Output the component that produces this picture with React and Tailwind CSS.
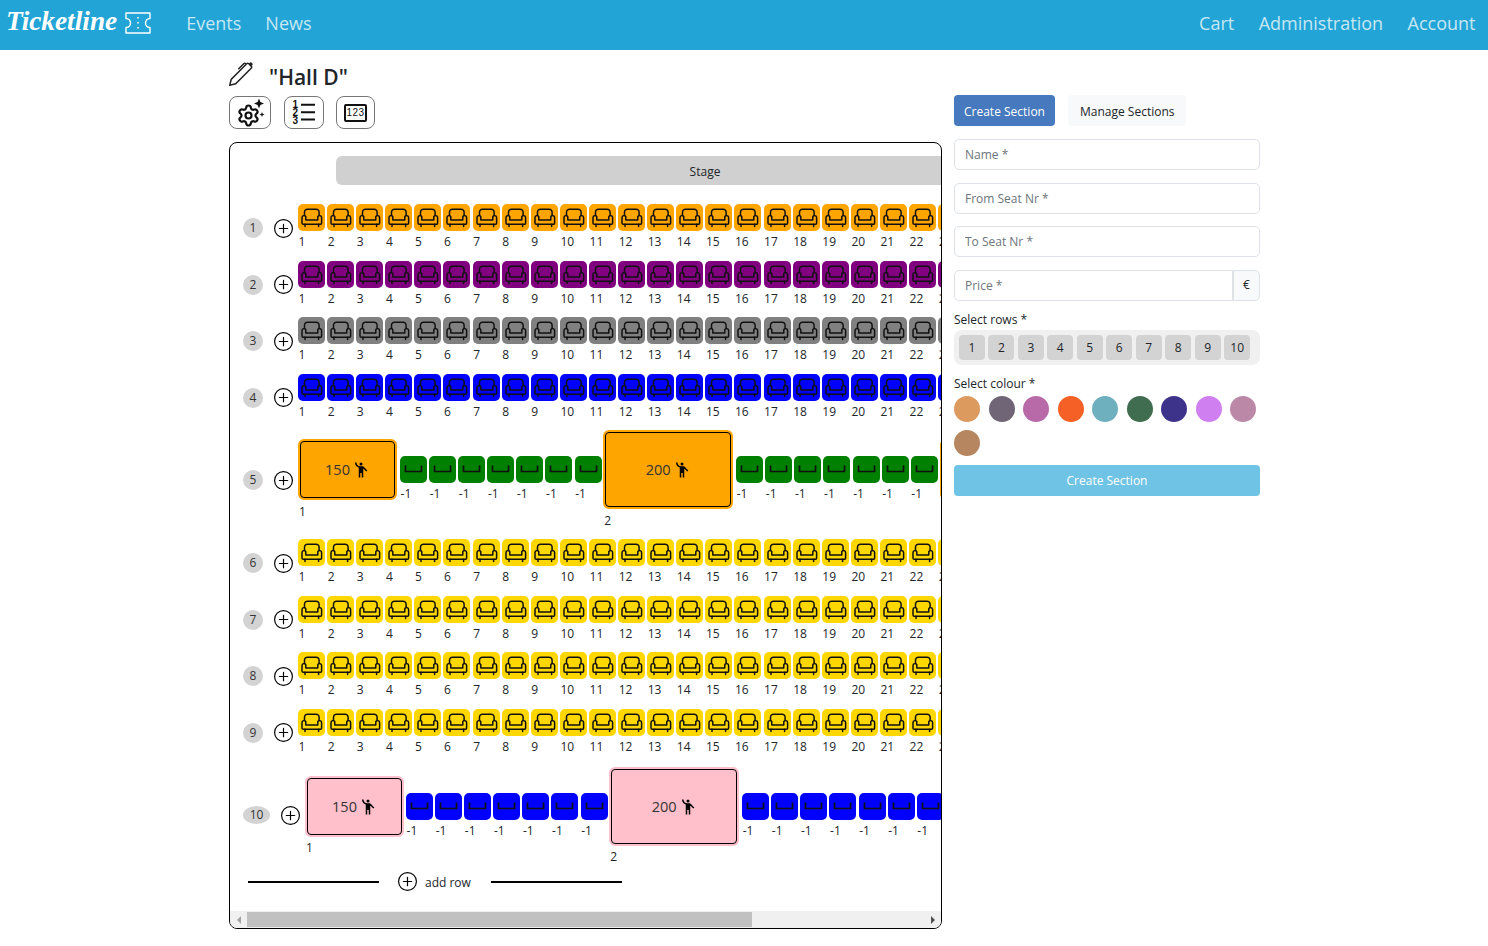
import { Settings } from "lucide-react";
import { BsPen, BsPlusCircle } from "react-icons/bs";
import { MdEmojiPeople } from "react-icons/md";

const range = (n) => Array.from({ length: n }, (_, i) => i + 1);

function ChairIcon() {
  return (
    <svg viewBox="0 0 27 27" className="h-[27px] w-[27px]" fill="none" stroke="#111" strokeWidth="1.5" strokeLinecap="round" strokeLinejoin="round">
      <path d="M6.5 11.5V8.2a3 3 0 0 1 3-3h8.6a3 3 0 0 1 3 3v3.3" />
      <path d="M4 13.5a2 2 0 0 1 3.8-.8V16h12v-3.3a2 2 0 0 1 3.8.8V19a1.3 1.3 0 0 1-1.3 1.3H5.3A1.3 1.3 0 0 1 4 19z" />
      <path d="M7 20.3v2.2M20.6 20.3v2.2" />
    </svg>
  );
}

function EmptyIcon() {
  return (
    <svg viewBox="0 0 27 27" className="h-[27px] w-[27px]" fill="none" stroke="#111" strokeWidth="1.7">
      <path d="M5.5 9.5v6h16v-6" />
    </svg>
  );
}

function Seat({ color, label, empty }) {
  return (
    <div className="w-[29.1px] shrink-0">
      <div className={`h-[27px] w-[27px] rounded-[5px] ${color}`}>{empty ? <EmptyIcon /> : <ChairIcon />}</div>
      <div className="pt-[1px] pl-[0.6px] text-[12px] leading-[20px] text-[#212529]">{label}</div>
    </div>
  );
}

function Section({ big, pink, price, label }) {
  return (
    <div className={`shrink-0 ${pink && !big ? "mr-[2px]" : "mr-[3px]"}`}>
      <div
        className={`flex items-center justify-center rounded-[6px] border-2 ${pink ? "border-[#ffc0cb] bg-[#ffc0cb]" : "border-[#ffa500] bg-[#ffa500]"} ${big ? "h-[79px] w-[130px]" : "h-[61px] w-[99px]"}`}
      >
        <div className="flex h-full w-full items-center justify-center rounded-[4px] border border-black text-[14.5px] text-[#333]">
          {price}
          <MdEmojiPeople className="ml-[2px] h-[18px] w-[18px] text-black" />
        </div>
      </div>
      <div className={`pl-[1px] text-[12px] leading-[19.5px] text-[#212529] ${pink ? "mt-[1px]" : "mt-[2px]"}`}>{label}</div>
    </div>
  );
}

function RowLabel({ n }) {
  return (
    <div className={`flex shrink-0 items-center ${n === 10 ? "mb-[3px]" : ""}`}>
      {n === 10 ? (
        <div className="flex h-[18px] w-[27px] items-center justify-center rounded-[50%] bg-[#d3d3d3] text-[12px] text-[#333]">{n}</div>
      ) : (
        <div className="flex h-[20px] w-[20px] items-center justify-center rounded-full bg-[#d3d3d3] text-[12px] text-[#333]">{n}</div>
      )}
      <BsPlusCircle className="ml-[11px] mr-[5px] h-[19px] w-[19px] text-black" />
    </div>
  );
}

function SeatRow({ n, color }) {
  return (
    <div className="flex w-max items-center pl-[13px]">
      <RowLabel n={n} />
      <div className="flex">
        {range(24).map((i) => (
          <Seat key={i} color={color} label={i} />
        ))}
      </div>
    </div>
  );
}

function SectionRow({ n, pink, color }) {
  const empties = range(7).map((i) => <Seat key={i} color={color} label="-1" empty />);
  return (
    <div className={`flex w-max items-center pl-[13px] ${pink ? "mt-[2px]" : ""}`}>
      <RowLabel n={n} />
      <Section pink={pink} price="150" label="1" />
      {empties}
      <div className="-ml-[0.5px]">
        <Section big pink={pink} price="200" label="2" />
      </div>
      {empties}
      {!pink && <Section pink={pink} price="150" label="3" />}
    </div>
  );
}

function ToolbarButton({ className, children }) {
  return (
    <button type="button" className={`flex h-[33px] items-center justify-center rounded-[8px] border border-[#777] bg-white ${className}`}>
      {children}
    </button>
  );
}

function HallEditor() {
  return (
    <div className="flex w-[713px] shrink-0 flex-col">
      <div className="flex h-[46px] items-center">
        <BsPen className="mt-[2px] h-[24px] w-[24px] text-[#222]" />
        <h1 className="mt-[9px] ml-[16px] text-[21px] font-semibold text-[#212529]">"Hall D"</h1>
      </div>
      <div className="flex gap-[12.5px]">
        <ToolbarButton className="w-[42px]">
          <svg viewBox="0 0 36 30" className="h-[30px] w-[36px]">
            <Settings x="4.5" y="5.5" width="24" height="24" stroke="#111" strokeWidth="2.2" fill="none" />
            <path d="M27 0.5l1.4 3.6L32 5.5l-3.6 1.4L27 10.5l-1.4-3.6L22 5.5l3.6-1.4z" fill="#111" />
            <path d="M30 14l.7 1.8 1.8.7-1.8.7-.7 1.8-.7-1.8-1.8-.7 1.8-.7z" fill="#111" />
          </svg>
        </ToolbarButton>
        <ToolbarButton className="w-[40px]">
          <svg viewBox="0 0 30 28" className="h-[28px] w-[30px]">
            <text x="3.5" y="9" fontSize="10" fontWeight="700" fontFamily="Liberation Sans, sans-serif" fill="#111">1</text>
            <text x="3.5" y="16.8" fontSize="10" fontWeight="700" fontFamily="Liberation Sans, sans-serif" fill="#111">2</text>
            <text x="3.5" y="24.5" fontSize="10" fontWeight="700" fontFamily="Liberation Sans, sans-serif" fill="#111">3</text>
            <path d="M12 5.8h14M12 13.2h14M12 20.5h14" stroke="#111" strokeWidth="2" />
          </svg>
        </ToolbarButton>
        <ToolbarButton className="w-[39px]">
          <span className="flex h-[18px] w-[23px] items-center justify-center rounded-[2px] border-2 border-[#111] font-['Liberation_Sans',sans-serif] text-[10px] leading-none tracking-[0.5px] text-[#111]">
            123
          </span>
        </ToolbarButton>
      </div>

      <div className="mt-[13px] flex h-[787px] flex-col overflow-hidden rounded-[8px] border border-black">
        <div className="flex-1 overflow-hidden">
          <div className="mt-[13px] ml-[106px] flex h-[29px] w-[738px] items-center justify-center rounded-[6px] bg-[#d0d0d0] pt-[2px] text-[12px] text-[#212529]">
            Stage
          </div>
          <div className="mt-[19px] flex flex-col gap-[8.5px]">
            <SeatRow n={1} color="bg-[#ffa500]" />
            <SeatRow n={2} color="bg-[#800080]" />
            <SeatRow n={3} color="bg-[#808080]" />
            <SeatRow n={4} color="bg-[#0000ff]" />
            <SectionRow n={5} color="bg-[#008000]" />
            <SeatRow n={6} color="bg-[#ffd700]" />
            <SeatRow n={7} color="bg-[#ffd700]" />
            <SeatRow n={8} color="bg-[#ffd700]" />
            <SeatRow n={9} color="bg-[#ffd700]" />
            <SectionRow n={10} pink color="bg-[#0000ff]" />
          </div>
          <div className="mt-[5px] ml-[18px] flex w-[374px] items-center">
            <div className="h-[2px] w-[131px] bg-black" />
            <BsPlusCircle className="ml-[19px] h-[19px] w-[19px] text-black" />
            <span className="ml-[8px] pt-[2px] text-[12px] text-[#212529]">add row</span>
            <div className="ml-auto h-[2px] w-[131px] bg-black" />
          </div>
        </div>
        <div className="flex h-[17px] shrink-0 items-center bg-[#f0f0f0]">
          <div className="flex w-[17px] justify-center">
            <span className="h-0 w-0 border-y-[4px] border-r-[4px] border-y-transparent border-r-[#a3a3a3]" />
          </div>
          <div className="h-[15px] w-[505px] bg-[#c1c1c1]" />
          <div className="ml-auto flex w-[17px] justify-center">
            <span className="h-0 w-0 border-y-[4px] border-l-[4px] border-y-transparent border-l-[#505050]" />
          </div>
        </div>
      </div>
    </div>
  );
}

function Field({ placeholder }) {
  return (
    <input
      placeholder={placeholder}
      className="h-[31px] w-full rounded-[5px] border border-[#dee2e6] bg-white px-[10px] text-[12px] outline-none placeholder:text-[#6c757d]"
    />
  );
}

const swatches = [
  "bg-[#dd9a5f]",
  "bg-[#6f6577]",
  "bg-[#b86aa8]",
  "bg-[#f46025]",
  "bg-[#6fb0bf]",
  "bg-[#406d50]",
  "bg-[#3d338a]",
  "bg-[#d07ff0]",
  "bg-[#bb88a8]",
  "bg-[#b5865f]",
];

function SectionForm() {
  return (
    <div className="mt-[45px] flex w-[306px] shrink-0 flex-col">
      <div className="flex gap-[13px]">
        <button type="button" className="h-[31px] rounded-[4px] bg-[#4679bd] px-[10px] pt-[2px] text-[12px] text-white">
          Create Section
        </button>
        <button type="button" className="h-[31px] rounded-[4px] bg-[#f8f9fa] px-[12px] pt-[2px] text-[12px] text-[#212529]">
          Manage Sections
        </button>
      </div>
      <div className="mt-[13px] flex flex-col gap-[12.5px]">
        <Field placeholder="Name *" />
        <Field placeholder="From Seat Nr *" />
        <Field placeholder="To Seat Nr *" />
        <div className="flex">
          <input
            placeholder="Price *"
            className="h-[31px] w-[279px] rounded-l-[5px] border border-[#dee2e6] bg-white px-[10px] text-[12px] outline-none placeholder:text-[#6c757d]"
          />
          <span className="flex h-[31px] flex-1 items-center justify-center rounded-r-[5px] border border-[#dee2e6] bg-[#f8f9fa] text-[12px] text-[#212529]">
            €
          </span>
        </div>
      </div>
      <div className="mt-[10px] text-[12px] leading-[18px] text-[#212529]">Select rows *</div>
      <div className="mt-px flex h-[35px] items-center gap-[3.8px] rounded-[8px] bg-[#f0f0f0] pl-[5px]">
        {range(10).map((i) => (
          <span key={i} className="flex h-[25px] w-[25.7px] items-center justify-center rounded-[4px] bg-[#d3d3d3] pt-[2px] text-[12px] text-[#212529]">
            {i}
          </span>
        ))}
      </div>
      <div className="mt-[10px] text-[12px] leading-[18px] text-[#212529]">Select colour *</div>
      <div className="mt-[3px] flex flex-wrap gap-x-[8.5px] gap-y-[8px]">
        {swatches.map((c) => (
          <span key={c} className={`h-[26px] w-[26px] rounded-full ${c}`} />
        ))}
      </div>
      <button type="button" className="mt-[9px] h-[31px] rounded-[4px] bg-[#6fc3e4] pt-[2px] text-[12px] font-medium text-white">
        Create Section
      </button>
    </div>
  );
}

export default function App() {
  return (
    <div className="min-h-[946px] bg-white font-['Open_Sans',sans-serif]">
      <nav className="flex h-[50px] items-center bg-[#22a5d6] pr-[12.5px] pb-[3px] pl-[6px] text-[18px] text-white/75">
        <span className="-mt-[3px] font-['Liberation_Serif',serif] text-[27.3px] leading-none font-bold text-white italic">Ticketline</span>
        <svg viewBox="0 0 26 22" className="mt-[-1px] ml-[8px] h-[22px] w-[26px]" fill="none" stroke="#fff" strokeWidth="1.4" strokeLinejoin="round">
          <path d="M1 1h24v5.5a4.5 4.5 0 0 0 0 9V21H1v-5.5a4.5 4.5 0 0 0 0-9z" />
          <path d="M13 5v1.5M13 10v1.5M13 15v1.5" strokeWidth="1.6" />
        </svg>
        <a className="ml-[35px]">Events</a>
        <a className="ml-[24px]">News</a>
        <a className="ml-auto">Cart</a>
        <a className="ml-[24.5px]">Administration</a>
        <a className="ml-[24.5px]">Account</a>
      </nav>
      <main className="flex gap-[12px] pl-[229px]">
        <HallEditor />
        <SectionForm />
      </main>
    </div>
  );
}
